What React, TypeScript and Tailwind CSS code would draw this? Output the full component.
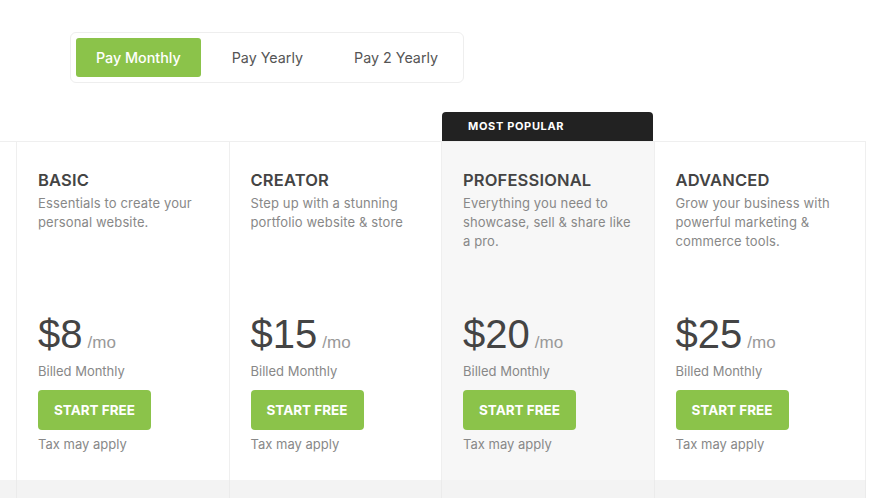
import { useState } from "react"

const plans = [
  { name: "BASIC", desc: "Essentials to create your personal website.", price: 8 },
  { name: "CREATOR", desc: "Step up with a stunning portfolio website & store", price: 15 },
  { name: "PROFESSIONAL", desc: "Everything you need to showcase, sell & share like a pro.", price: 20, popular: true },
  { name: "ADVANCED", desc: "Grow your business with powerful marketing & commerce tools.", price: 25 },
]

const tabs = ["Pay Monthly", "Pay Yearly", "Pay 2 Yearly"]

export default function App() {
  const [active, setActive] = useState(0)

  return (
    <div className="h-[498px] w-[880px] overflow-hidden bg-white font-['Inter',sans-serif] text-[#444]">
      {/* Billing toggle */}
      <div className="pl-[70px] pt-[32px]">
        <div className="inline-flex gap-[11px] rounded-md border border-[#eeeeee] p-[5px]">
          {tabs.map((t, i) => (
            <button
              key={t}
              onClick={() => setActive(i)}
              className={`h-[39px] rounded-[3px] px-5 text-[14.3px] ${
                active === i ? "bg-[#8bc34a] font-medium text-white" : "text-[#555]"
              }`}
            >
              {t}
            </button>
          ))}
        </div>
      </div>

      {/* Plans */}
      <div className="mt-[29px] w-[866px]">
        <div className="flex h-[29px] pl-[16px]">
          {plans.map((p) => (
            <div key={p.name} className="w-[212.5px] px-px">
              {p.popular && (
                <div className="flex h-full items-center rounded-t-[4px] bg-[#222] pl-[26px] text-[11px] font-bold tracking-[0.06em] text-white">
                  MOST POPULAR
                </div>
              )}
            </div>
          ))}
        </div>
        <div className="flex border-t border-[#efefef] pl-[16px]">
          {plans.map((p, i) => (
            <div
              key={p.name}
              className={`flex h-[338px] w-[212.5px] flex-col border-l border-[#efefef] px-[21px] pt-[27px] pb-[26px] ${
                i === plans.length - 1 ? "border-r" : ""
              } ${p.popular ? "bg-[#f7f7f7]" : ""}`}
            >
              <h3 className="text-[16.5px] leading-[22px] font-semibold tracking-[0.01em] text-[#444]">{p.name}</h3>
              <p className="mt-[3px] text-[13px] leading-[19px] tracking-[0.01em] text-[#888]">{p.desc}</p>
              <div className="mt-auto">
                <div className="flex items-baseline font-['Liberation_Sans',Arial,sans-serif]">
                  <span className="text-[40px] leading-[40px] text-[#444]">${p.price}</span>
                  <span className="ml-[5px] text-[17px] text-[#999]">/mo</span>
                </div>
                <div className="mt-[7px] text-[13px] leading-[19px] text-[#888]">Billed Monthly</div>
                <button className="mt-[9px] h-[40px] w-[113px] rounded-[4px] bg-[#8bc34a] text-[13.5px] font-bold text-white">
                  START FREE
                </button>
                <div className="mt-[5px] text-[13px] leading-[19px] text-[#888]">Tax may apply</div>
              </div>
            </div>
          ))}
        </div>
        <div className="flex bg-[#f3f3f3] pl-[16px]">
          {plans.map((p, i) => (
            <div
              key={p.name}
              className={`h-[40px] w-[212.5px] border-l border-[#ebebeb] ${i === plans.length - 1 ? "border-r" : ""}`}
            />
          ))}
        </div>
      </div>
    </div>
  )
}
